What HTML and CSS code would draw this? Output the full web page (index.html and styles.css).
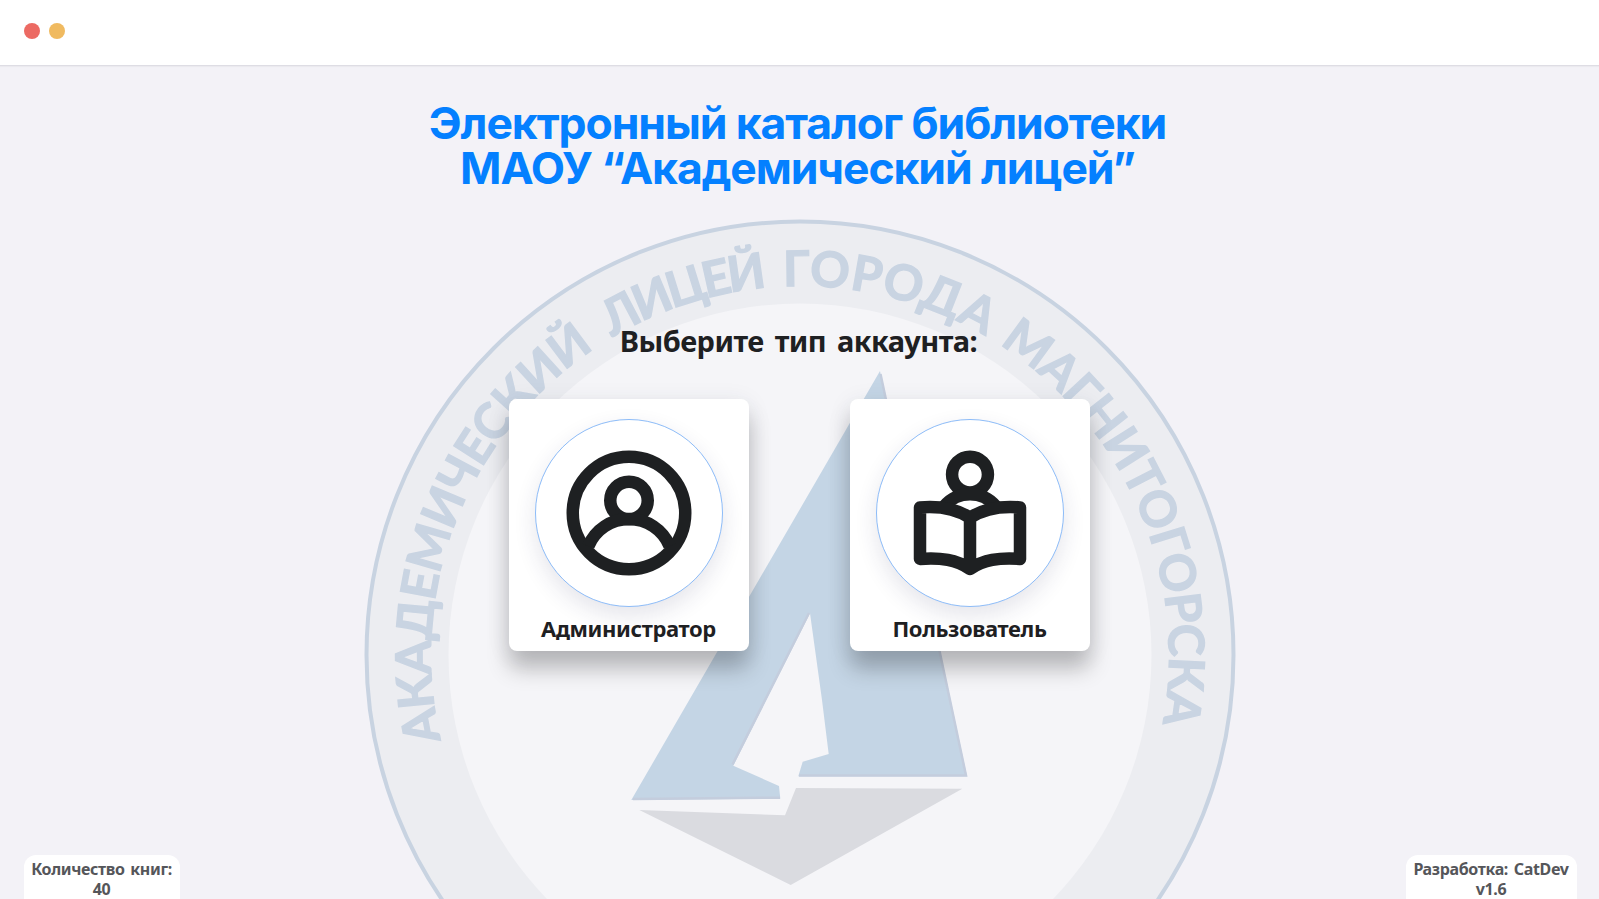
FILE: index.html
```html
<!DOCTYPE html>
<html lang="ru">
<head>
<meta charset="utf-8">
<title>Электронный каталог библиотеки</title>
<link rel="stylesheet" href="styles.css">
</head>
<body>
<div class="app">
  <svg class="emblem" viewBox="0 0 872 872" aria-hidden="true">
    <defs>
      <path id="ring" d="M76.8 520.6 A369 369 0 0 1 436 67 A369 369 0 0 1 798.2 506.4"/>
    </defs>
    <circle class="emblem-ring" cx="436" cy="436" r="433.5"/>
    <circle class="emblem-disc" cx="436" cy="436" r="351.5"/>
    <g class="emblem-text">
      <text textLength="447"><textPath href="#ring" startOffset="0">АКАДЕМИЧЕСКИЙ</textPath></text>
      <text textLength="164"><textPath href="#ring" startOffset="468">ЛИЦЕЙ</textPath></text>
      <text textLength="211"><textPath href="#ring" startOffset="648">ГОРОДА</textPath></text>
      <text textLength="438"><textPath href="#ring" startOffset="875">МАГНИТОГОРСКА</textPath></text>
    </g>
    <g transform="translate(-364 -219)">
      <path class="sail" d="M880 371 L631.3 800 L780.3 798.7 L779 786 L733.3 765.7 L810 613.3 L822 700 L828.7 754 L802.7 761.7 L798.3 776.3 H967 Z"/>
      <path class="sail-edge" d="M880.5 374 L966 775.5 H799 M780 797.7 L633 799 M732.5 764.5 L809 613"/>
      <path class="hull" d="M639.3 810 L785 815.3 L796 788 L962.3 788.7 L790.7 885 Z"/>
    </g>
  </svg>

  <header class="titlebar">
    <span class="dot dot-close"></span>
    <span class="dot dot-minimize"></span>
  </header>

  <main class="content">
    <h1 class="title">Электронный каталог библиотеки<br>МАОУ “Академический лицей”</h1>
    <h2 class="prompt">Выберите тип аккаунта:</h2>
    <div class="cards">
      <button class="card">
        <span class="avatar">
          <svg class="icon" viewBox="0 0 24 24"><circle cx="12" cy="12" r="9"/><circle cx="12" cy="10" r="3"/><path d="M5.5 17.3A7.04 7.04 0 0 1 18.5 17.3"/></svg>
        </span>
        <span class="label">Администратор</span>
      </button>
      <button class="card">
        <span class="avatar">
          <svg class="icon" viewBox="0 0 24 24"><circle cx="12" cy="5.85" r="2.87"/><path d="M7.9 10.9A5.4 5.4 0 0 1 16.1 10.9"/><path d="M12 12.75C10 11.45 7.4 10.8 4 11.1V19.35C7.4 19.1 9.8 19.5 12 20.95C14.2 19.5 16.6 19.1 20 19.35V11.1C16.6 10.8 14 11.45 12 12.75V20.9"/></svg>
        </span>
        <span class="label">Пользователь</span>
      </button>
    </div>
  </main>

  <footer class="footer">
    <div class="tag tag-count">Количество книг:<br>40</div>
    <div class="tag tag-dev">Разработка: CatDev<br>v1.6</div>
  </footer>
</div>
</body>
</html>
```
FILE: styles.css
```css
* { box-sizing: border-box; }
body { margin: 0; background: #f3f2f7; }
.app {
  position: relative;
  display: flex;
  flex-direction: column;
  width: 100%;
  height: 899px;
  overflow: hidden;
  background: #f3f2f7;
  font-family: "Noto Sans", "Open Sans", sans-serif;
}

/* Watermark behind the page content */
.emblem {
  position: absolute;
  left: calc(50% - 435.5px);
  top: 219px;
  width: 872px;
  height: 872px;
}
.emblem-ring { fill: #ecedf1; stroke: #c8d3e1; stroke-width: 4; }
.emblem-disc { fill: #f5f5f8; }
.emblem-text {
  fill: #c9d4e2;
  stroke: #c9d4e2;
  stroke-width: 1.3;
  font: 700 49px Lato, "Open Sans", sans-serif;
}
.sail { fill: #c4d5e5; }
.sail-edge { fill: none; stroke: #c4cddd; stroke-width: 2.5; }
.hull { fill: #dadbe0; }

.titlebar {
  position: relative;
  display: flex;
  gap: 9px;
  flex: none;
  height: 66px;
  padding: 23px 24px 0;
  background: #fff;
  border-bottom: 1px solid #dedde4;
  box-shadow: 0 1px 1px rgba(0, 0, 0, .03);
}
.dot { width: 16px; height: 16px; border-radius: 50%; }
.dot-close { background: #ec6a63; }
.dot-minimize { background: #f0ba60; }

.content {
  position: relative;
  flex: 1;
  display: flex;
  flex-direction: column;
  align-items: center;
}
.title {
  margin: 35px 0 0;
  padding-right: 4px;
  color: #0480ff;
  font: 700 44.5px/45px Inter, sans-serif;
  letter-spacing: -1.1px;
  text-align: center;
  white-space: nowrap;
}
.prompt {
  margin: 130px 0 0;
  padding-right: 2px;
  color: #1e2022;
  font-size: 29px;
  font-weight: 700;
  line-height: 40px;
  letter-spacing: -.55px;
  word-spacing: 4px;
  white-space: nowrap;
}
.cards { display: flex; gap: 101px; margin-top: 38px; }
.card {
  display: flex;
  flex-direction: column;
  align-items: center;
  width: 240px;
  height: 252px;
  padding: 20px 0 0;
  border: 0;
  border-radius: 8px;
  background: #fff;
  box-shadow: 0 18px 22px rgba(0, 0, 0, .23), 0 4px 24px rgba(40, 50, 80, .09);
  font-family: inherit;
}
.avatar {
  display: grid;
  place-items: center;
  width: 188px;
  height: 188px;
  border: 1px solid #8dbcf8;
  border-radius: 50%;
  background: #fff;
  box-shadow: 0 9px 22px rgba(40, 45, 90, .12);
}
.icon {
  width: 150px;
  height: 150px;
  fill: none;
  stroke: #1e2022;
  stroke-width: 2;
  stroke-linejoin: round;
}
.label {
  margin-top: 6px;
  padding-right: 1px;
  color: #1e2022;
  font-size: 22px;
  font-weight: 700;
  line-height: 30px;
  letter-spacing: -.38px;
}

.footer {
  position: relative;
  display: flex;
  justify-content: space-between;
  flex: none;
  height: 44px;
  padding: 0 22px 0 24px;
}
.tag {
  padding: 5px 1px 0 0;
  border-radius: 12px 12px 0 0;
  background: #fff;
  color: #55565a;
  font-size: 16px;
  font-weight: 700;
  line-height: 19.5px;
  letter-spacing: -.35px;
  word-spacing: 2px;
  text-align: center;
  white-space: nowrap;
}
.tag-count { width: 156px; }
.tag-dev { width: 171px; }
```
